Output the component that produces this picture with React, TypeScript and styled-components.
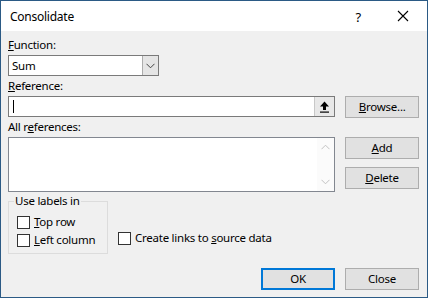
import styled, { createGlobalStyle } from "styled-components"

const GlobalStyle = createGlobalStyle`
  html, body {
    margin: 0;
    padding: 0;
    background: #ffffff;
  }
  * {
    box-sizing: border-box;
  }
`

export default function App() {
  return (
    <>
      <GlobalStyle />
      <Window>
        <TitleBar>
          <Title>Consolidate</Title>
          <HelpGlyph>?</HelpGlyph>
          <CloseIcon width="12" height="12" viewBox="0 0 12 12">
            <path d="M1 1 L11 11 M11 1 L1 11" stroke="#000" strokeWidth="1.1" />
          </CloseIcon>
        </TitleBar>
        <Body>
          <FieldLabel $top={6}>
            <u>F</u>unction:
          </FieldLabel>
          <Select>
            <SelectValue>Sum</SelectValue>
            <SelectArrow>
              <svg width="9" height="6" viewBox="0 0 9 6">
                <path d="M0.5 0.8 L4.5 4.8 L8.5 0.8" stroke="#444" strokeWidth="1" fill="none" />
              </svg>
            </SelectArrow>
          </Select>

          <FieldLabel $top={2}>
            <u>R</u>eference:
          </FieldLabel>
          <Row>
            <TextInput>
              <Caret />
              <CollapseButton>
                <svg width="11" height="12" viewBox="0 0 11 12">
                  <path d="M5.5 0.5 L10 5.5 L7 5.5 L7 9 L4 9 L4 5.5 L1 5.5 Z" fill="#000" />
                  <rect x="1" y="10.5" width="9" height="1.2" fill="#000" />
                </svg>
              </CollapseButton>
            </TextInput>
            <Button>
              <u>B</u>rowse...
            </Button>
          </Row>

          <FieldLabel $top={1}>
            All r<u>e</u>ferences:
          </FieldLabel>
          <Row>
            <ListBox>
              <ScrollTrack>
                <svg width="9" height="6" viewBox="0 0 9 6">
                  <path d="M0.5 5.2 L4.5 1.2 L8.5 5.2" stroke="#c2c2c2" strokeWidth="1" fill="none" />
                </svg>
                <svg width="9" height="6" viewBox="0 0 9 6">
                  <path d="M0.5 0.8 L4.5 4.8 L8.5 0.8" stroke="#c2c2c2" strokeWidth="1" fill="none" />
                </svg>
              </ScrollTrack>
            </ListBox>
            <ButtonStack>
              <Button>
                <u>A</u>dd
              </Button>
              <Button>
                <u>D</u>elete
              </Button>
            </ButtonStack>
          </Row>

          <OptionsRow>
            <GroupBox>
              <Legend>Use labels in</Legend>
              <CheckRow>
                <CheckBox />
                <span>
                  <u>T</u>op row
                </span>
              </CheckRow>
              <CheckRow>
                <CheckBox />
                <span>
                  <u>L</u>eft column
                </span>
              </CheckRow>
            </GroupBox>
            <CheckRow $bottom={8}>
              <CheckBox />
              <span>
                Create links to <u>s</u>ource data
              </span>
            </CheckRow>
          </OptionsRow>

          <Footer>
            <Button $primary>OK</Button>
            <Button>Close</Button>
          </Footer>
        </Body>
      </Window>
    </>
  )
}

const Window = styled.div`
  width: 428px;
  height: 298px;
  border: 1px solid #2b5a85;
  display: flex;
  flex-direction: column;
  font-family: "Noto Sans", "Open Sans", sans-serif;
  font-size: 11.5px;
  letter-spacing: -0.25px;
  color: #000;
  background: #f0f0f0;
`

const TitleBar = styled.div`
  height: 30px;
  background: #ffffff;
  display: flex;
  align-items: center;
  padding-left: 9px;
  padding-right: 18px;
`

const Title = styled.div`
  flex: 1;
  font-size: 12px;
  padding-top: 1px;
`

const HelpGlyph = styled.div`
  font-size: 13px;
  margin-right: 36px;
  padding-top: 1px;
`

const CloseIcon = styled.svg`
  display: block;
`

const Body = styled.div`
  flex: 1;
  display: flex;
  flex-direction: column;
  padding: 0 8px 0 7px;
`

const FieldLabel = styled.div<{ $top: number }>`
  margin-top: ${(p) => p.$top}px;
  height: 16px;
  line-height: 16px;
  margin-bottom: 2px;
`

const Select = styled.div`
  width: 151px;
  height: 21px;
  border: 1px solid #7a7a7a;
  background: #ffffff;
  display: flex;
  align-items: stretch;
`

const SelectValue = styled.div`
  flex: 1;
  padding-left: 3px;
  line-height: 19px;
`

const SelectArrow = styled.div`
  width: 16px;
  background: #e5e5e5;
  border-left: 1px solid #acacac;
  display: flex;
  align-items: center;
  justify-content: center;
`

const Row = styled.div`
  display: flex;
  align-items: flex-start;
  gap: 10px;
`

const TextInput = styled.div`
  width: 329px;
  height: 21px;
  border: 1px solid #7a7a7a;
  background: #ffffff;
  display: flex;
  align-items: center;
  justify-content: space-between;
  padding-left: 4px;
`

const Caret = styled.div`
  width: 1px;
  height: 13px;
  background: #000;
`

const CollapseButton = styled.div`
  width: 20px;
  height: 19px;
  background: #e8e8e8;
  border-left: 1px solid #c8c8c8;
  display: flex;
  align-items: center;
  justify-content: center;
`

const Button = styled.div<{ $primary?: boolean }>`
  width: 74px;
  height: 22px;
  background: #e1e1e1;
  border: ${(p) => (p.$primary ? "2px solid #0078d7" : "1px solid #adadad")};
  display: flex;
  align-items: center;
  justify-content: center;
  line-height: 16px;
`

const ButtonStack = styled.div`
  display: flex;
  flex-direction: column;
  gap: 8px;
`

const ListBox = styled.div`
  width: 329px;
  height: 55px;
  border: 1px solid #828790;
  background: #ffffff;
  display: flex;
  justify-content: flex-end;
`

const ScrollTrack = styled.div`
  width: 17px;
  background: #fbfbfb;
  display: flex;
  flex-direction: column;
  align-items: center;
  justify-content: space-between;
  padding: 6px 0;
`

const OptionsRow = styled.div`
  display: flex;
  align-items: flex-end;
  gap: 10px;
  margin-top: 2px;
`

const GroupBox = styled.fieldset`
  margin: 0;
  width: 100px;
  height: 60px;
  border: 1px solid #dcdcdc;
  padding: 6px 0 0 8px;
  display: flex;
  flex-direction: column;
  gap: 2px;
`

const Legend = styled.legend`
  padding: 0 1px;
  margin-left: -3px;
  line-height: 14px;
`

const CheckRow = styled.label<{ $bottom?: number }>`
  display: flex;
  align-items: center;
  gap: 4px;
  height: 16px;
  line-height: 16px;
  white-space: nowrap;
  margin-bottom: ${(p) => p.$bottom ?? 0}px;
`

const CheckBox = styled.span`
  width: 13px;
  height: 13px;
  border: 1px solid #333333;
  background: #ffffff;
  flex-shrink: 0;
`

const Footer = styled.div`
  display: flex;
  justify-content: flex-end;
  gap: 10px;
  margin-top: 14px;
`
